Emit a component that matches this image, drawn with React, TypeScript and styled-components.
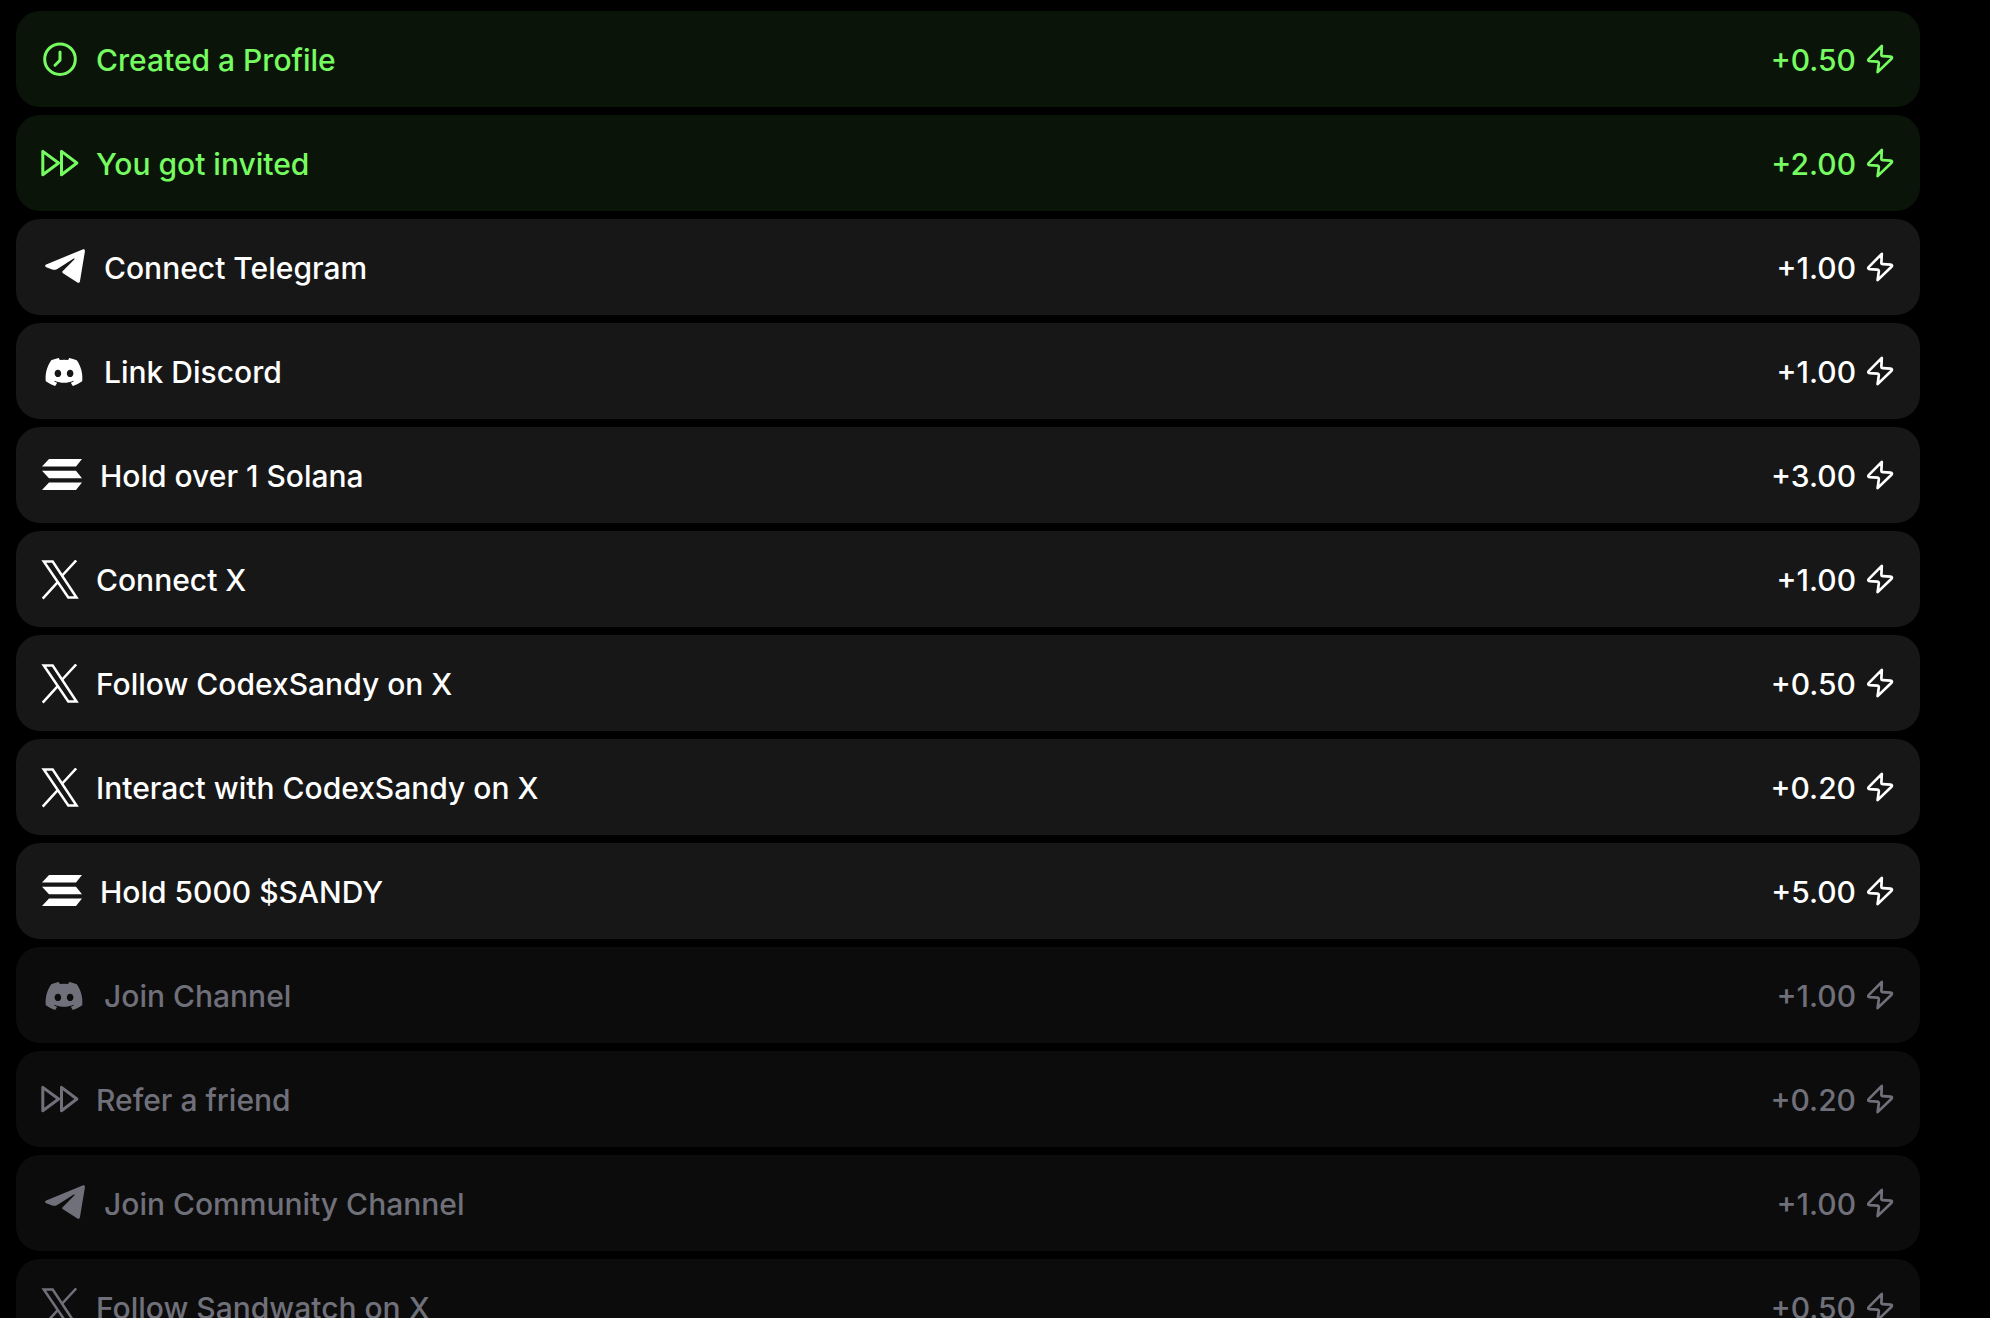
import React from "react";
import styled, { createGlobalStyle } from "styled-components";
import { FaDiscord } from "react-icons/fa";

const GlobalStyle = createGlobalStyle`
  * { box-sizing: border-box; }
  body {
    margin: 0;
    background: #000;
    font-family: Inter, "Liberation Sans", sans-serif;
  }
`;

type Status = "done" | "open" | "locked";
type IconName = "clock" | "forward" | "telegram" | "discord" | "solana" | "x";

const palette: Record<Status, { ink: string; surface: string }> = {
  done: { ink: "#76fb61", surface: "#0a1409" },
  open: { ink: "#ffffff", surface: "#171717" },
  locked: { ink: "#70707a", surface: "#0c0c0c" },
};

const List = styled.ul`
  list-style: none;
  margin: 0;
  padding: 11px 70px 0 16px;
  display: flex;
  flex-direction: column;
  gap: 8px;
`;

const Row = styled.li<{ $status: Status }>`
  display: flex;
  align-items: center;
  justify-content: space-between;
  padding: 25px 24px 23px;
  border-radius: 24px;
  color: ${(p) => palette[p.$status].ink};
  background: ${(p) => palette[p.$status].surface};
  font-size: 30px;
  font-weight: 500;
  line-height: 48px;
`;

const Task = styled.div`
  display: flex;
  align-items: center;
  gap: 16px;
`;

const Reward = styled.div`
  display: flex;
  align-items: center;
  gap: 8px;
`;

const IconBox = styled.span<{ $width: number }>`
  display: flex;
  align-items: center;
  justify-content: center;
  width: ${(p) => p.$width}px;
  height: 40px;
`;

const Clock = () => (
  <svg width="40" height="40" viewBox="0 0 40 40" fill="none" stroke="currentColor" strokeWidth="3" strokeLinecap="round" strokeLinejoin="round">
    <circle cx="20" cy="19.2" r="15.3" />
    <path d="M20 12v8.2l-5 5" />
  </svg>
);

const Forward = () => (
  <svg width="40" height="40" viewBox="0 0 40 40" fill="none" stroke="currentColor" strokeWidth="3" strokeLinejoin="round">
    <path d="M2.8 7.4v23.4L18.6 19zM21.5 7.4v23.4L36.9 19z" />
  </svg>
);

const Telegram = () => (
  <svg width="48" height="40" viewBox="0 0 48 40" fill="currentColor">
    <path d="M6.2 16.400L42.6 1.5C44.2 .9 45.1 1.6 44.9 3.4L40 32.9C39.7 34.9 38.5 35.3 37 34.3L23 25.2C22 24.5 22 23.7 22.8 22.9L34.3 11.6C35.1 10.7 34.5 10 33.3 10.7L17.3 20.9C15.5 22 14 22.1 12.2 21.5L6.3 19.2C4.7 18.5 4.7 17.1 6.2 16.4Z" />
  </svg>
);

const Solana = () => (
  <svg width="40" height="40" viewBox="0 0 40 40" fill="currentColor">
    <path d="M7 3h33l-6 7.6H0zM0 14.7h34l6 7.6H7zM7 26.4h33L34 34H0z" />
  </svg>
);

const XLogo = () => (
  <svg width="40" height="40" viewBox="0 0 40 40" fill="none" stroke="currentColor" strokeWidth="2.5">
    <path d="M3.8 1.5h8.9L36.500 37.5h-8.2z" />
    <path d="M36.2 .4L21.8 16M17.5 22.3L2.7 38.6" />
  </svg>
);

const Zap = () => (
  <svg width="32" height="32" viewBox="0 0 32 32" fill="none" stroke="currentColor" strokeWidth="2.7" strokeLinejoin="round" strokeLinecap="round">
    <path d="M17.8 1.9L4.7 15.1c-.9 1-.5 2 .9 2.100l7.6.4c1.4.1 1.8.8 1.6 2l-1.2 8.5 13.900-13.4c.9-1 .5-2-.9-2.100l-7.6-.4c-1.4-.1-1.8-.8-1.6-2z" />
  </svg>
);

const icons: Record<IconName, { width: number; glyph: React.ReactNode }> = {
  clock: { width: 40, glyph: <Clock /> },
  forward: { width: 40, glyph: <Forward /> },
  telegram: { width: 48, glyph: <Telegram /> },
  discord: { width: 48, glyph: <FaDiscord size={40} /> },
  solana: { width: 44, glyph: <Solana /> },
  x: { width: 40, glyph: <XLogo /> },
};

const tasks: { icon: IconName; title: string; reward: string; status: Status }[] = [
  { icon: "clock", title: "Created a Profile", reward: "+0.50", status: "done" },
  { icon: "forward", title: "You got invited", reward: "+2.00", status: "done" },
  { icon: "telegram", title: "Connect Telegram", reward: "+1.00", status: "open" },
  { icon: "discord", title: "Link Discord", reward: "+1.00", status: "open" },
  { icon: "solana", title: "Hold over 1 Solana", reward: "+3.00", status: "open" },
  { icon: "x", title: "Connect X", reward: "+1.00", status: "open" },
  { icon: "x", title: "Follow CodexSandy on X", reward: "+0.50", status: "open" },
  { icon: "x", title: "Interact with CodexSandy on X", reward: "+0.20", status: "open" },
  { icon: "solana", title: "Hold 5000 $SANDY", reward: "+5.00", status: "open" },
  { icon: "discord", title: "Join Channel", reward: "+1.00", status: "locked" },
  { icon: "forward", title: "Refer a friend", reward: "+0.20", status: "locked" },
  { icon: "telegram", title: "Join Community Channel", reward: "+1.00", status: "locked" },
  { icon: "x", title: "Follow Sandwatch on X", reward: "+0.50", status: "locked" },
];

export default function App() {
  return (
    <>
      <GlobalStyle />
      <List>
        {tasks.map((task) => (
          <Row key={task.title} $status={task.status}>
            <Task>
              <IconBox $width={icons[task.icon].width}>{icons[task.icon].glyph}</IconBox>
              <span>{task.title}</span>
            </Task>
            <Reward>
              <span>{task.reward}</span>
              <Zap />
            </Reward>
          </Row>
        ))}
      </List>
    </>
  );
}
